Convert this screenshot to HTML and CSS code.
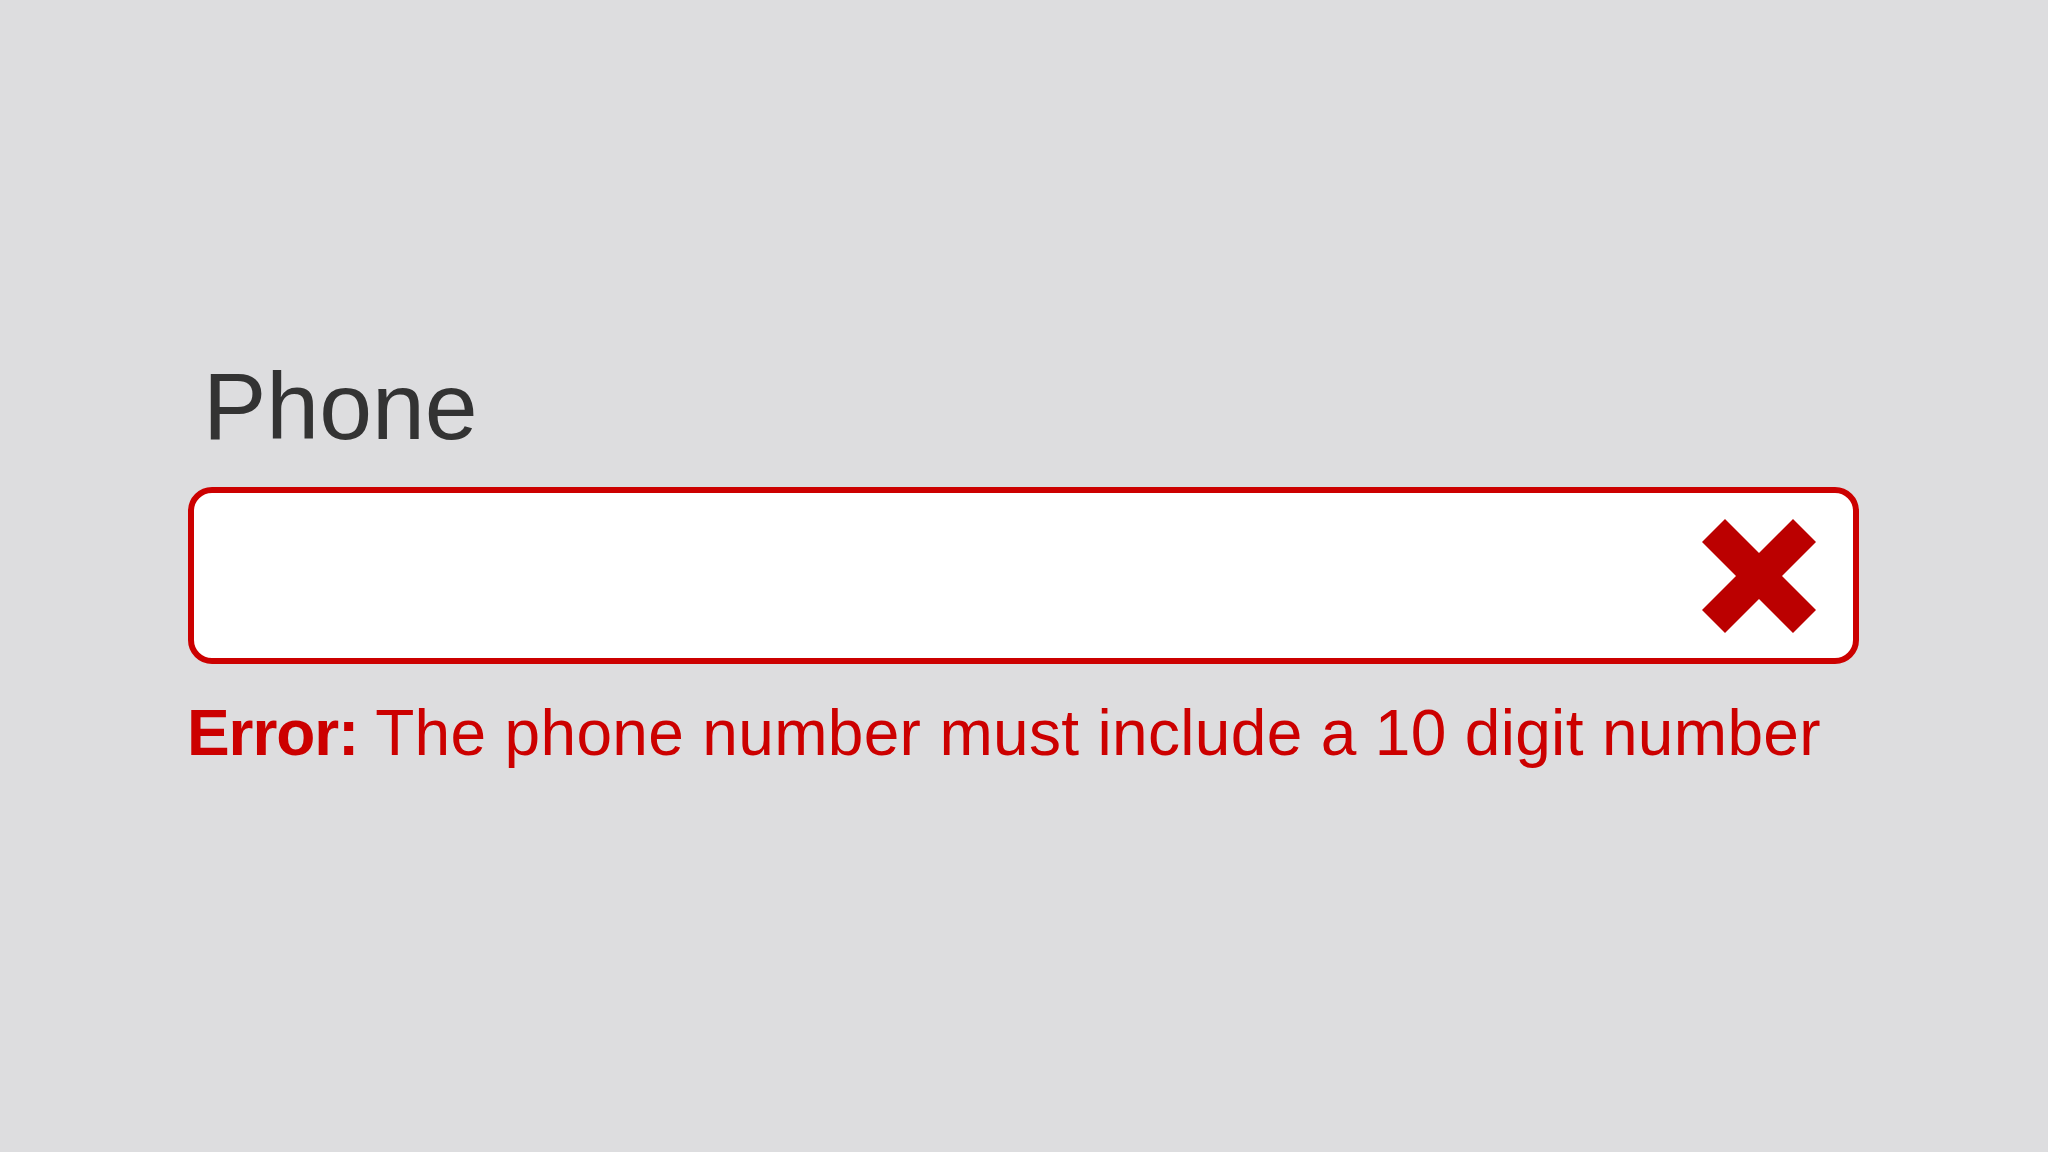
FILE: index.html
```html
<!DOCTYPE html>
<html lang="en">
<head>
    <meta charset="UTF-8">
    <meta name="viewport" content="width=device-width, initial-scale=1.0">
    <title>Phone</title>
    <link rel="stylesheet" href="styles.css">
</head>
<body>

    <div class="form-field">
        <label class="field-label" for="phone">Phone</label>

        <div class="input-box">
            <input id="phone" class="field-input" type="tel" value="">
            <svg class="error-icon" viewBox="0 0 114 114" aria-hidden="true">
                <polygon points="23,0 57,34 91,0 114,23 80,57 114,91 91,114 57,80 23,114 0,91 34,57 0,23" />
            </svg>
        </div>

        <p class="error-message"><strong>Error:</strong> The phone number must include a 10 digit number</p>
    </div>

</body>
</html>
```

FILE: styles.css
```css
html, body {
    height: 100%;
}
body {
    font-family: "Liberation Sans", Arial, Helvetica, sans-serif;
    background-color: #dddddf;
    margin: 0;
}
.form-field {
    display: flex;
    flex-direction: column;
    padding: 359px 0 0 182px;
    width: 1677px;
}
.field-label {
    font-size: 95px;
    line-height: 1;
    color: #333333;
    margin-left: 21px;
}
.input-box {
    display: flex;
    align-items: center;
    margin: 33px 0 0 6px;
    height: 165px;
    border: 6px solid #cc0000;
    border-radius: 24px;
    background-color: #fff;
    padding: 0 37px 0 24px;
}
.field-input {
    flex: 1;
    border: none;
    outline: none;
    background: transparent;
    font-family: inherit;
    font-size: 64px;
    color: #333;
}
.error-icon {
    width: 114px;
    height: 114px;
    fill: #bb0000;
    flex-shrink: 0;
}
.error-message {
    margin: 37px 0 0 5px;
    font-size: 64px;
    line-height: 1;
    color: #cc0000;
    white-space: nowrap;
    letter-spacing: 0.33px;
}
.error-message strong {
    font-weight: 700;
    letter-spacing: -1.1px;
}
```
